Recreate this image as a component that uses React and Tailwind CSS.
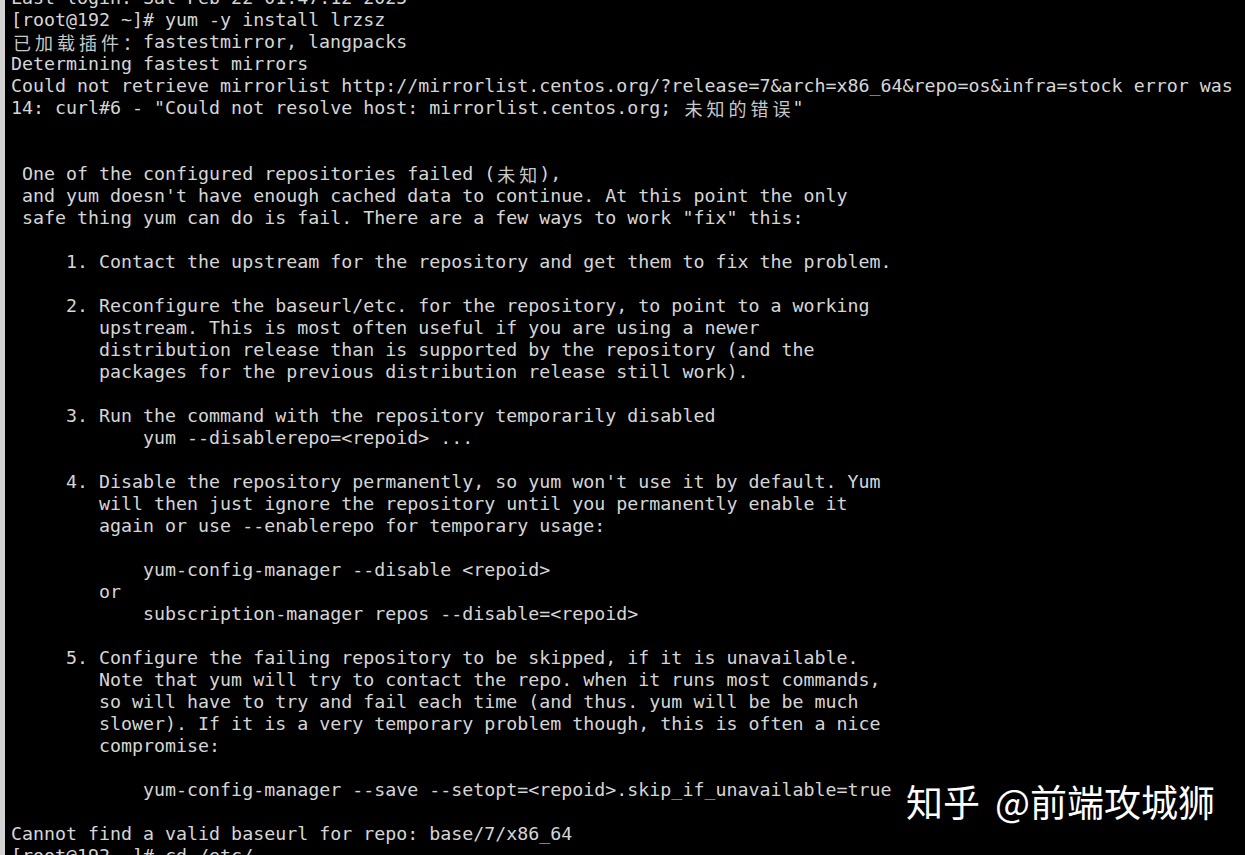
import React from 'react';

const lines = [
    'Last login: Sat Feb 22 01:47:12 2025',
    '[root@192 ~]# yum -y install lrzsz',
    '已加载插件：fastestmirror, langpacks',
    'Determining fastest mirrors',
    'Could not retrieve mirrorlist http://mirrorlist.centos.org/?release=7&arch=x86_64&repo=os&infra=stock error was',
    '14: curl#6 - "Could not resolve host: mirrorlist.centos.org; 未知的错误"',
    '',
    '',
    ' One of the configured repositories failed (未知),',
    " and yum doesn't have enough cached data to continue. At this point the only",
    ' safe thing yum can do is fail. There are a few ways to work "fix" this:',
    '',
    '     1. Contact the upstream for the repository and get them to fix the problem.',
    '',
    '     2. Reconfigure the baseurl/etc. for the repository, to point to a working',
    '        upstream. This is most often useful if you are using a newer',
    '        distribution release than is supported by the repository (and the',
    '        packages for the previous distribution release still work).',
    '',
    '     3. Run the command with the repository temporarily disabled',
    '            yum --disablerepo=<repoid> ...',
    '',
    "     4. Disable the repository permanently, so yum won't use it by default. Yum",
    '        will then just ignore the repository until you permanently enable it',
    '        again or use --enablerepo for temporary usage:',
    '',
    '            yum-config-manager --disable <repoid>',
    '        or',
    '            subscription-manager repos --disable=<repoid>',
    '',
    '     5. Configure the failing repository to be skipped, if it is unavailable.',
    '        Note that yum will try to contact the repo. when it runs most commands,',
    '        so will have to try and fail each time (and thus. yum will be be much',
    '        slower). If it is a very temporary problem though, this is often a nice',
    '        compromise:',
    '',
    '            yum-config-manager --save --setopt=<repoid>.skip_if_unavailable=true',
    '',
    'Cannot find a valid baseurl for repo: base/7/x86_64',
    '[root@192 ~]# cd /etc/',
];

// wide chars take two terminal cells (22px)
const isWide = (ch) => /[\u3000-\u9fff\uff00-\uffef]/.test(ch);

const TermLine = ({ text }) => {
    const parts = [];
    let buf = '';
    [...text].forEach((ch, i) => {
        if (isWide(ch)) {
            if (buf) parts.push(<span key={'t' + i}>{buf}</span>);
            buf = '';
            parts.push(
                <span
                    key={'w' + i}
                    className="inline-block align-top w-[22px] leading-[22px] text-center text-[#c8c8c8] font-['Noto_Sans_CJK_SC',sans-serif] text-[18px]"
                >
                    {ch}
                </span>
            );
        } else {
            buf += ch;
        }
    });
    if (buf) parts.push(<span key="end">{buf}</span>);

    return <div className="h-[22px] leading-[22px] whitespace-pre">{parts}</div>;
};

const App = () => {
    return (
        <div className="relative w-[1245px] h-[855px] overflow-hidden bg-black flex">
            {/* window frame edge */}
            <div className="w-[5px] h-full bg-[#d2d2d2] shrink-0" />

            <div className="pl-[6px] -mt-[13px] text-[18.3px] text-[#d6d6d6] font-['DejaVu_Sans_Mono','Liberation_Mono',monospace]">
                {lines.map((l, i) => (
                    <TermLine key={i} text={l} />
                ))}
            </div>

            {/* watermark */}
            <div className="absolute left-[906px] top-[778px] flex text-[37px] leading-[46px] text-white font-['Noto_Sans_CJK_SC',sans-serif] whitespace-pre [text-shadow:0_0_2px_rgba(0,0,0,0.6)]">
                <span>知乎</span>
                <span className="ml-[15px]">@前端攻城狮</span>
            </div>
        </div>
    );
};

export default App;
